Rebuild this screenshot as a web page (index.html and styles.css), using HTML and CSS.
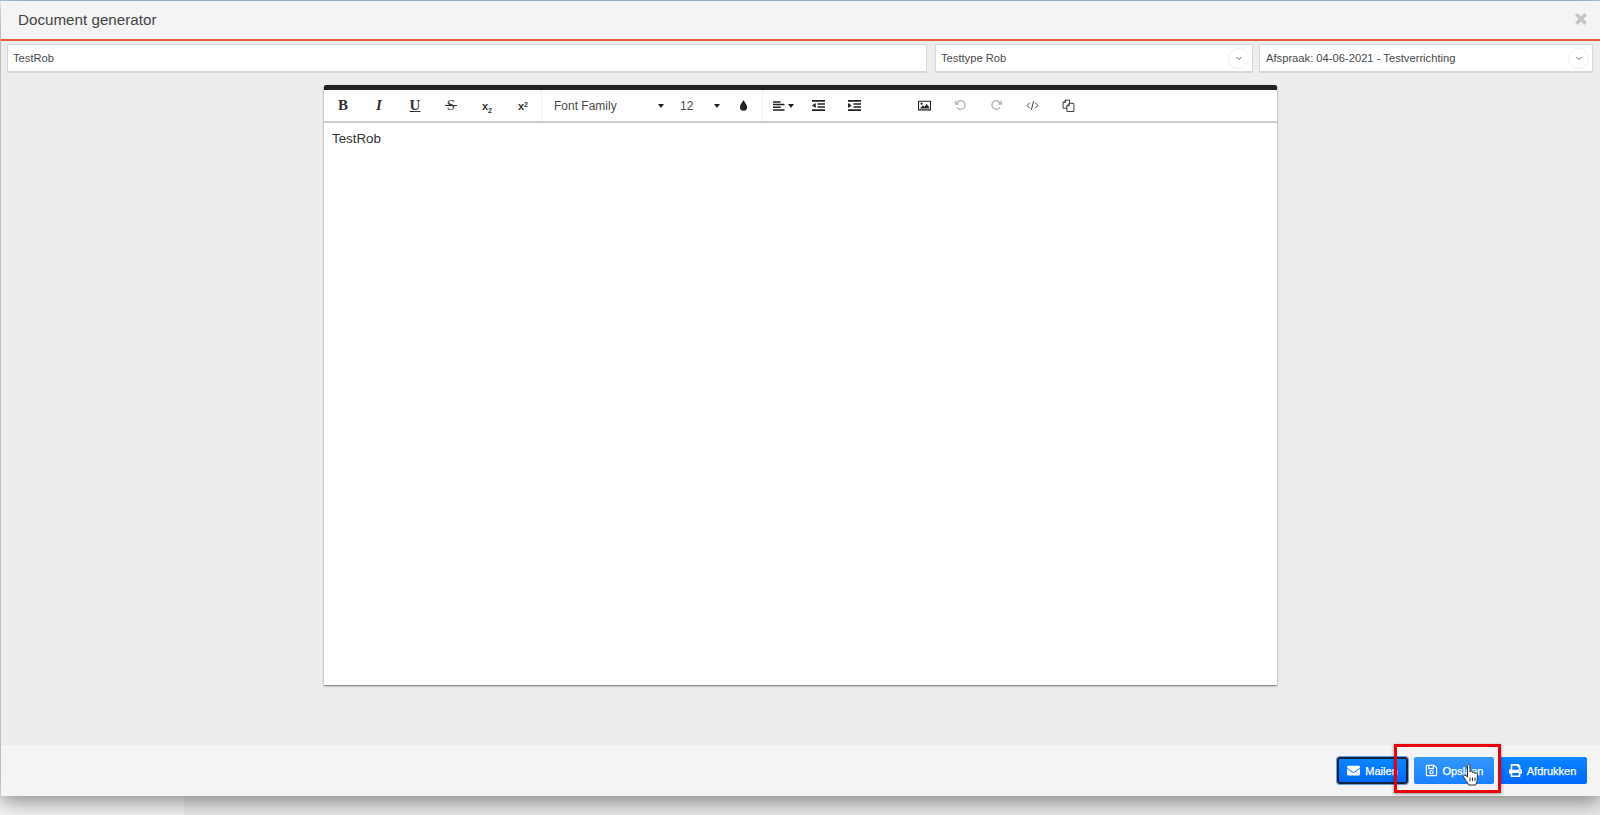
FILE: index.html
```html
<!DOCTYPE html>
<html lang="en">
<head>
    <meta charset="UTF-8">
    <meta name="viewport" content="width=device-width, initial-scale=1.0">
    <title>Document generator</title>
    <link rel="stylesheet" href="styles.css">
</head>
<body>
    <div class="backdrop">
        <div class="backdrop-side"></div>
        <div class="backdrop-main"></div>
    </div>

    <div class="modal">
        <div class="modal-header">
            <h1 class="modal-title">Document generator</h1>
            <svg class="close-icon" viewBox="0 0 12 12"><path d="M2 2l8 8M10 2l-8 8"/></svg>
        </div>

        <div class="filters">
            <div class="field field-name">TestRob</div>
            <div class="field field-type">
                <span>Testtype Rob</span>
                <span class="chevron"><svg viewBox="0 0 10 10"><path d="M2.500 4l2.500 2.500L7.500 4"/></svg></span>
            </div>
            <div class="field field-appointment">
                <span>Afspraak: 04-06-2021 - Testverrichting</span>
                <span class="chevron"><svg viewBox="0 0 10 10"><path d="M2.500 4l2.500 2.500L7.500 4"/></svg></span>
            </div>
        </div>

        <div class="modal-body">
            <div class="editor">
                <div class="toolbar">
                    <div class="tool-group">
                        <span class="tool tool-serif tool-bold">B</span>
                        <span class="tool tool-serif tool-italic">I</span>
                        <span class="tool tool-serif tool-underline">U</span>
                        <span class="tool tool-serif tool-strike"><span>S</span></span>
                        <span class="tool tool-script"><span>x<sub>2</sub></span></span>
                        <span class="tool tool-script"><span>x<sup>2</sup></span></span>
                    </div>
                    <div class="tool-group">
                        <span class="select select-family">Font Family<i class="caret"></i></span>
                        <span class="select select-size">12<i class="caret"></i></span>
                        <span class="tool tool-drop">
                            <svg class="icon" viewBox="0 0 12 12"><path class="solid" d="M6 1C7 3.400 9.300 5 9.300 7.600a3.300 3.300 0 0 1-6.600 0C2.700 5 5 3.400 6 1z"/></svg>
                        </span>
                    </div>
                    <div class="tool-group tool-group-last">
                        <span class="tool tool-align">
                            <svg class="icon" viewBox="0 0 12 12"><path class="solid" d="M0 1.500h8v1.500H0zM0 4.300h12v1.500H0zM0 7.100h8v1.500H0zM0 9.900h12v1.500H0z"/></svg>
                            <i class="caret"></i>
                        </span>
                        <span class="tool">
                            <svg class="icon" viewBox="0 0 12 12"><path class="solid" d="M0 1h12v1.500H0zM5 4h7v1.300H5zM5 6.700h7V8H5zM0 9.500h12V11H0zM3.500 3.800v4.400L0 6z"/></svg>
                        </span>
                        <span class="tool">
                            <svg class="icon" viewBox="0 0 12 12"><path class="solid" d="M0 1h12v1.500H0zM5 4h7v1.300H5zM5 6.700h7V8H5zM0 9.500h12V11H0zM0 3.800v4.400L3.500 6z"/></svg>
                        </span>
                        <span class="tool tool-blank"></span>
                        <span class="tool tool-image">
                            <svg class="icon" viewBox="0 0 12 12"><path class="solid" fill-rule="evenodd" d="M0 1.500h12v9H0zM1 2.500v7h10v-7zM1.800 8.800l2.700-3 1.500 1.500 2-2.700 2.200 2.700v1.500zM3.300 3.300a1 1 0 1 1 0 2 1 1 0 0 1 0-2z"/></svg>
                        </span>
                        <span class="tool tool-off">
                            <svg class="icon" viewBox="0 0 12 12"><path class="line" d="M2.800 7.800A4 4 0 1 0 3 3.200L1.500 4.600M1.500 1.500v3.100h3.100"/></svg>
                        </span>
                        <span class="tool tool-off">
                            <svg class="icon" viewBox="0 0 12 12"><path class="line" d="M9.200 7.800A4 4 0 1 1 9 3.200l1.500 1.400M10.500 1.500v3.100H7.400"/></svg>
                        </span>
                        <span class="tool">
                            <svg class="icon" viewBox="0 0 12 12"><path class="line thin" d="M3.500 3.500L1 6l2.500 2.500M8.500 3.500L11 6 8.500 8.500M7 2L5 10"/></svg>
                        </span>
                        <span class="tool">
                            <svg class="icon" viewBox="0 0 12 12"><path class="line thin" d="M4.500 8.500H1V3.200L3.200 1H7V4M3.200 1v2.200H1M4.500 11.500V6.200L6.700 4H11v7.500zM6.700 4v2.200H4.500"/></svg>
                        </span>
                    </div>
                </div>
                <div class="editor-text">TestRob</div>
            </div>
        </div>

        <div class="modal-footer">
            <button type="button" class="btn btn-focus">
                <svg viewBox="0 0 512 512"><path d="M502.3 190.8c3.9-3.1 9.700-.2 9.700 4.700V400c0 26.500-21.500 48-48 48H48c-26.500 0-48-21.500-48-48V195.600c0-5 5.700-7.800 9.700-4.700 22.400 17.400 52.100 39.500 154.100 113.600 21.100 15.400 56.700 47.800 92.200 47.600 35.700.3 72-32.800 92.300-47.600 102-74.100 131.600-96.300 154-113.700zM256 320c23.200.4 56.600-29.200 73.400-41.400 132.700-96.300 142.800-104.700 173.400-128.700 5.800-4.500 9.200-11.500 9.200-18.900v-19c0-26.500-21.500-48-48-48H48C21.500 64 0 85.500 0 112v19c0 7.400 3.400 14.300 9.200 18.900 30.600 23.900 40.700 32.400 173.400 128.700 16.800 12.200 50.200 41.800 73.400 41.400z"/></svg>
                Mailen
            </button>
            <button type="button" class="btn btn-hover">
                <svg viewBox="0 0 448 512"><path d="M433.941 129.941l-83.882-83.882A48 48 0 0 0 316.118 32H48C21.490 32 0 53.490 0 80v352c0 26.510 21.490 48 48 48h352c26.510 0 48-21.490 48-48V163.882a48 48 0 0 0-14.059-33.941zM272 80v80H144V80h128zm122 352H54a6 6 0 0 1-6-6V86a6 6 0 0 1 6-6h42v104c0 13.255 10.745 24 24 24h176c13.255 0 24-10.745 24-24V83.882l78.243 78.243a6 6 0 0 1 1.757 4.243V426a6 6 0 0 1-6 6zM224 232c-48.523 0-88 39.477-88 88s39.477 88 88 88 88-39.477 88-88-39.477-88-88-88zm0 128c-22.056 0-40-17.944-40-40s17.944-40 40-40 40 17.944 40 40-17.944 40-40 40z"/></svg>
                Opslaan
            </button>
            <button type="button" class="btn btn-print">
                <svg viewBox="0 0 512 512"><path d="M448 192V77.250c0-8.490-3.370-16.620-9.370-22.630L393.370 9.370c-6-6-14.140-9.370-22.630-9.370H96C78.330 0 64 14.330 64 32v160c-35.350 0-64 28.650-64 64v112c0 8.840 7.160 16 16 16h48v96c0 17.670 14.330 32 32 32h320c17.670 0 32-14.330 32-32v-96h48c8.840 0 16-7.160 16-16V256c0-35.350-28.650-64-64-64zm-64 256H128v-96h256v96zm0-224H128V64h192v48c0 8.840 7.160 16 16 16h48v96zm48 72c-13.250 0-24-10.750-24-24 0-13.260 10.750-24 24-24s24 10.740 24 24c0 13.250-10.750 24-24 24z"/></svg>
                Afdrukken
            </button>
        </div>
    </div>

    <!-- annotation + pointer on top of the screenshot -->
    <div class="mark-box"></div>
    <svg class="hand-cursor" viewBox="0 0 18 24">
        <path d="M5.500 2.200c0-1.500 2.500-1.500 2.500 0V9c.3-1.200 2.300-1.200 2.500 0v.7c.3-1.100 2.200-1.100 2.400.1v.7c.4-1 2.300-.9 2.400.4V16c0 2.600-1.300 3.700-1.600 6H6.500C6 20 3.800 17.500 1.800 14.200c-1-1.600.8-3 2.200-1.700l1.500 1.600z"/>
        <path d="M8 14.500V18M10.500 14.500V18M13 14.500V18"/>
    </svg>
</body>
</html>
```

FILE: styles.css
```css
* {
    box-sizing: border-box;
}
html, body {
    height: 100%;
}
body {
    margin: 0;
    overflow: hidden;
    font-family: "Liberation Sans", Arial, sans-serif;
    color: #333;
    background-color: #f2f2f2;
    position: relative;
}

/* page behind the modal */
.backdrop {
    display: flex;
    height: 100%;
    border-top: 1px solid #a9cfdb;
}
.backdrop-side {
    width: 184px;
    background-color: #f4f4f4;
}
.backdrop-main {
    flex-grow: 1;
    background-color: #e9e9e9;
}

.modal {
    position: absolute;
    top: 1px;
    left: 1px;
    right: 0;
    height: 795px;
    display: flex;
    flex-direction: column;
    background-color: #ededed;
    box-shadow: 0 5px 20px rgba(0, 0, 0, 0.45);
}
.modal-header {
    display: flex;
    align-items: center;
    justify-content: space-between;
    height: 40px;
    padding: 0 12px 2px 17px;
    background-color: #f4f4f4;
    border-bottom: 2px solid #ea5a3c;
}
.modal-title {
    margin: 0;
    font-size: 15.2px;
    font-weight: 400;
    color: #444;
}
.close-icon {
    width: 14px;
    height: 14px;
    fill: none;
    stroke: #c4c4c4;
    stroke-width: 3;
}

.filters {
    display: flex;
    padding: 3px 7px 0 6px;
}
.field {
    display: flex;
    align-items: center;
    justify-content: space-between;
    height: 29px;
    padding: 0 3px 0 5px;
    font-size: 11.2px;
    color: #4a4a4a;
    background-color: white;
    border: 2px solid #d8d8d8;
    border-width: 1px 1px 2px 1px;
}
.field-name {
    flex-grow: 1;
}
.field-type {
    width: 318px;
    margin-left: 8px;
}
.field-appointment {
    width: 334px;
    margin-left: 6px;
    padding-left: 6px;
}
.chevron {
    display: flex;
    align-items: center;
    justify-content: center;
    width: 21px;
    height: 21px;
    border: 1px solid #eee;
    border-radius: 50%;
}
.chevron svg {
    width: 10px;
    height: 10px;
    fill: none;
    stroke: #666;
    stroke-width: 1;
}

.modal-body {
    flex-grow: 1;
    display: flex;
    justify-content: center;
    padding-top: 12px;
}
.editor {
    width: 953px;
    height: 600px;
    display: flex;
    flex-direction: column;
    background-color: white;
    border-top: 5px solid #222;
    border-radius: 2px 2px 0 0;
    box-shadow: 0 1px 2px rgba(0, 0, 0, 0.55);
}
.toolbar {
    display: flex;
    height: 33px;
    padding-left: 1px;
    border-bottom: 2px solid #ccc;
}
.tool-group {
    display: flex;
    align-items: stretch;
    height: 31px;
    border-right: 1px solid #f1f1f1;
}
.tool-group-last {
    border-right: none;
}
.tool {
    display: flex;
    align-items: center;
    justify-content: center;
    width: 36px;
    font-size: 14px;
    color: #222;
}
.tool-blank, .tool-image {
    width: 35px;
}
.tool-serif {
    font-family: "Liberation Serif", serif;
    font-size: 15px;
    font-weight: bold;
    color: #333;
}
.tool-italic {
    font-style: italic;
}
.tool-underline {
    text-decoration: underline;
}
.tool-strike {
    font-weight: 400;
}
.tool-strike span {
    padding: 0 2px;
    background: linear-gradient(#333, #333) center / 100% 1px no-repeat;
}
.tool-script {
    font-size: 11px;
    font-weight: bold;
    color: #333;
}
.tool-script sub, .tool-script sup {
    font-size: 7px;
    line-height: 0;
}
.tool-script sub {
    vertical-align: -3px;
}
.tool-script sup {
    vertical-align: 3px;
}
.tool-off {
    opacity: 0.3;
}
.tool-off .line {
    stroke-width: 1.4;
}
.tool-drop {
    padding-right: 2px;
}
.tool-align {
    width: 37px;
    gap: 3px;
    padding-left: 4px;
}
.icon {
    width: 13px;
    height: 13px;
}
.tool-align .icon {
    width: 11.5px;
}
.solid {
    fill: #222;
}
.line {
    fill: none;
    stroke: #222;
    stroke-width: 1;
}
.thin {
    stroke-width: 0.8;
}
.select {
    display: flex;
    align-items: center;
    justify-content: space-between;
    font-size: 12px;
    color: #4a4a4a;
    padding-left: 12px;
    padding-right: 6px;
}
.select-family {
    width: 128px;
}
.select-size {
    width: 56px;
    padding-left: 10px;
    padding-right: 6px;
}
.caret {
    width: 0;
    height: 0;
    border-top: 4px solid #222;
    border-left: 3.500px solid transparent;
    border-right: 3.500px solid transparent;
}
.editor-text {
    flex-grow: 1;
    padding: 8px 8px;
    font-size: 13.33px;
    color: #333;
}

.modal-footer {
    display: flex;
    align-items: flex-start;
    justify-content: flex-end;
    height: 50px;
    padding: 10px 13px 0 0;
    background-color: #f4f4f4;
    border-top: 1px solid #fafafa;
}
.btn {
    display: flex;
    align-items: center;
    justify-content: center;
    gap: 5px;
    height: 27px;
    padding: 0;
    font-family: "Liberation Sans", Arial, sans-serif;
    font-size: 11px;
    font-weight: 400;
    color: white;
    -webkit-text-stroke: 0.25px white;
    background: linear-gradient(#0a86ff, #0068ff);
    border: none;
    border-radius: 2px;
}
.btn svg {
    width: 13px;
    height: 13px;
    fill: white;
}
.btn-focus {
    width: 71px;
    border: 2px solid #14243c;
    border-radius: 3px;
    box-shadow: 0 0 0 1px #6d9be8;
}
.btn-hover {
    width: 80px;
    margin-left: 6px;
    background: linear-gradient(#3397ff, #1a80ff);
}
.btn-print {
    width: 89px;
    margin-left: 4px;
}

.mark-box {
    position: absolute;
    left: 1394px;
    top: 744px;
    width: 107px;
    height: 49px;
    border: 3px solid #e8000b;
    box-shadow: 0 1px 3px rgba(0, 0, 0, 0.4);
}
.hand-cursor {
    position: absolute;
    left: 1462px;
    top: 763px;
    width: 18px;
    height: 24px;
    fill: white;
    stroke: #333;
    stroke-width: 1;
}
```
